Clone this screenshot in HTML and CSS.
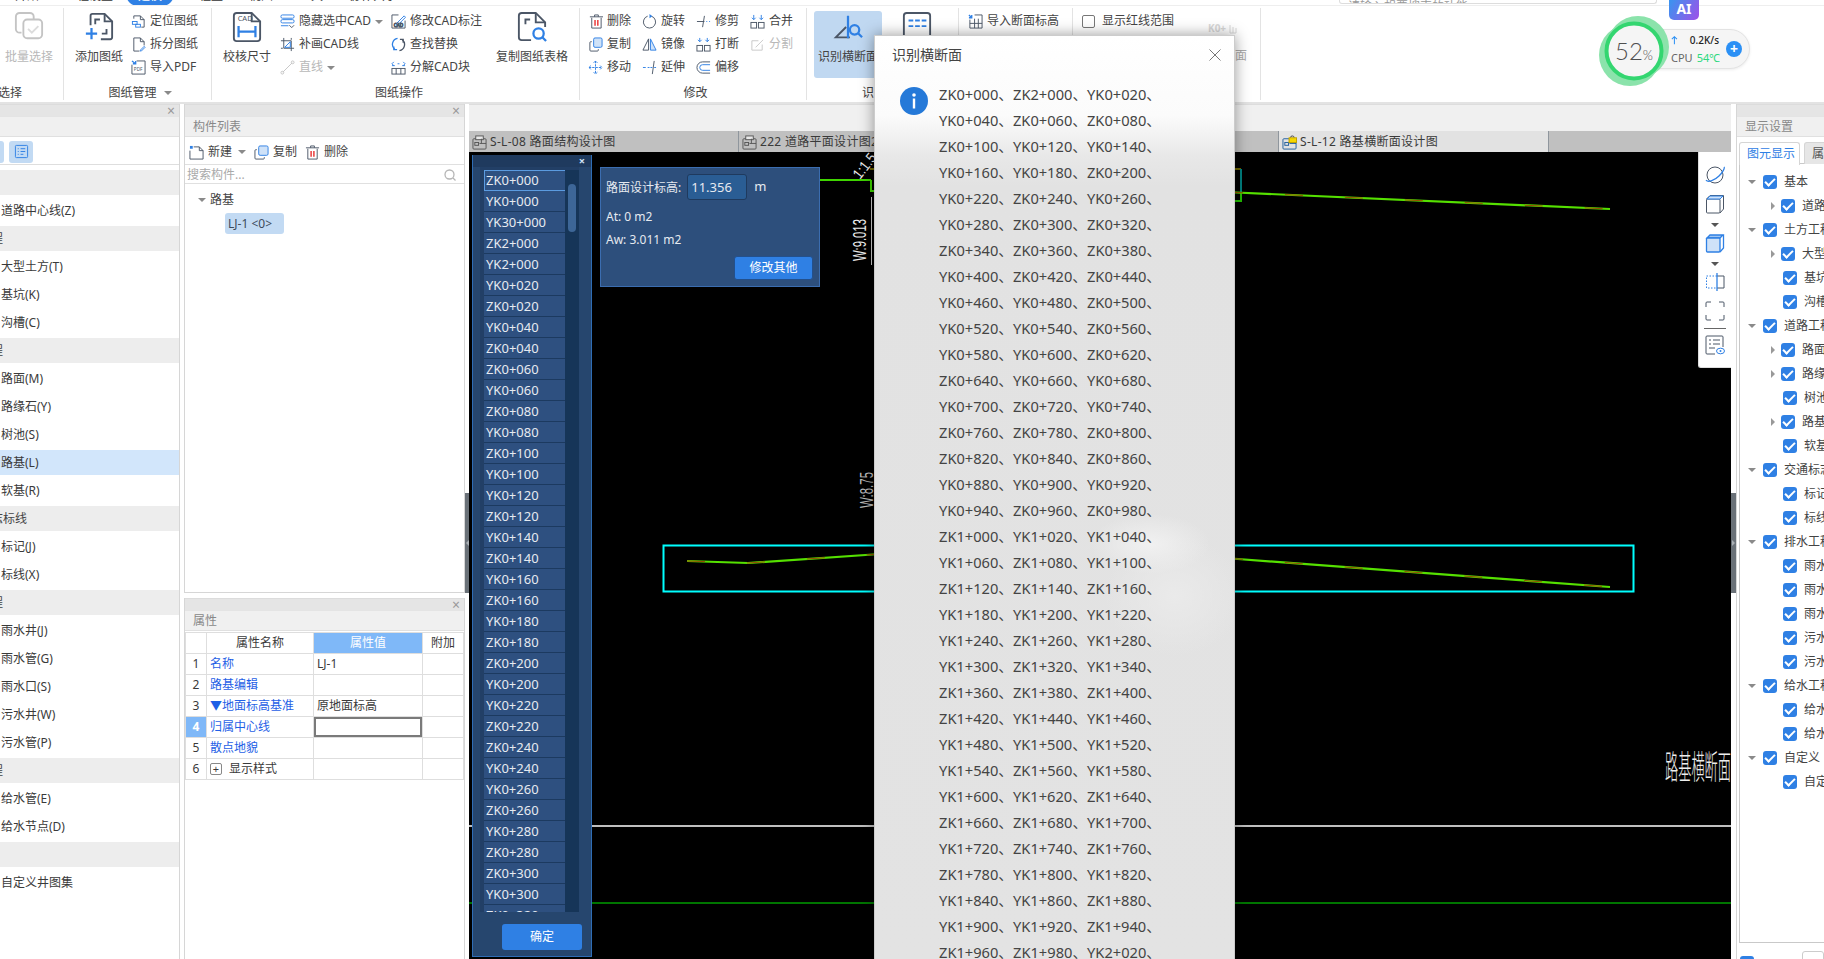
FILE: index.html
```html
<!DOCTYPE html>
<html lang="zh-CN">
<head>
<meta charset="utf-8">
<title>识别横断面</title>
<link rel="stylesheet" href="styles.css">
</head>
<body>
<div class="app">
  <header class="menubar">
    <nav class="menu">
      <span>开始</span><span>工程设置</span><span class="menu-on">建模</span><span>工程量</span><span>视图</span><span>工具</span><span>协作共享</span>
    </nav>
    <div class="topsearch">请输入想要搜索的功能</div>
    <span class="topright">工程协同</span>
  </header>

  <section class="ribbon">
    <div class="group g-select">
      <div class="group-body">
        <div class="big big-disabled">
          <svg class="ic30" viewBox="0 0 30 32" fill="none" stroke="#c4c4c4" stroke-width="2"><path d="M7 22H5a4 4 0 0 1-4-4V5a4 4 0 0 1 4-4h11a4 4 0 0 1 4 4v3"/><rect x="9" y="8" width="20" height="20" rx="4"/><path d="M14 18l4 4 7-7" stroke="#dcdcdc"/></svg>
          <span>批量选择</span>
        </div>
      </div>
      <div class="group-label">选择</div>
    </div>

    <div class="group g-sheet">
      <div class="group-body">
        <div class="big">
          <svg class="ic30" viewBox="0 0 30 32" fill="none" stroke="#4b5666" stroke-width="2"><path d="M6 14V4a2 2 0 0 1 2-2h13l8 8v17a2 2 0 0 1-2 2H17"/><path d="M21 2v8h8"/><path d="M11 13V8h5M23 18v5h-5"/><path d="M7 17v12M1 23h12" stroke="#2f80e4" stroke-width="2.4"/></svg>
          <span>添加图纸</span>
        </div>
        <div class="col col-a">
          <div class="rb"><svg class="ic15" viewBox="0 0 16 16" fill="none" stroke="#4b5666"><path d="M3 5V2h7l4 4v8h-3"/><path d="M10 2v4h4"/><rect x="1.5" y="8" width="5" height="3" stroke="#2f80e4"/><rect x="5" y="11" width="5" height="3" stroke="#2f80e4"/></svg><span>定位图纸</span></div>
          <div class="rb"><svg class="ic15" viewBox="0 0 16 16" fill="none" stroke="#4b5666"><path d="M9 15H3V1h7l4 4v4"/><path d="M10 1v4h4"/><path d="M10 14l4-4 1 1-4 4h-1z" stroke="#2f80e4"/></svg><span>拆分图纸</span></div>
          <div class="rb"><svg class="ic15" viewBox="0 0 16 16" fill="none"><path d="M1 5v10h14V1H6" stroke="#4b5666"/><path d="M1 1l4 3M5 1v3H2" stroke="#2f80e4" stroke-width="1.4"/><text x="3" y="12" class="tiny">PDF</text></svg><span>导入PDF</span></div>
        </div>
      </div>
      <div class="group-label">图纸管理 <i class="tri-down tri-gap"></i></div>
    </div>

    <div class="group g-cad">
      <div class="group-body">
        <div class="big">
          <svg class="ic30" viewBox="0 0 30 32" fill="none" stroke="#4b5666" stroke-width="2"><path d="M20 1H4a3 3 0 0 0-3 3v24a3 3 0 0 0 3 3h22a3 3 0 0 0 3-3V10z"/><path d="M20 1v9h9"/><text x="5" y="10" class="cadmark">CAD</text><path d="M6 21h18M6 15v12M24 15v12" stroke="#2f80e4" stroke-width="2.4"/></svg>
          <span>校核尺寸</span>
        </div>
        <div class="col col-b">
          <div class="rb"><svg class="ic15" viewBox="0 0 16 16" fill="none" stroke="#2f80e4"><rect x="1" y="1" width="14" height="3.5" rx="1.5"/><rect x="1" y="6" width="14" height="3.5" rx="1.5"/><path d="M1 12.5h8" /><path d="M10 12l2.500 2.500L15 12" stroke="#4b5666"/></svg><span>隐藏选中CAD</span><i class="tri-down"></i></div>
          <div class="rb"><svg class="ic15" viewBox="0 0 16 16" fill="none" stroke="#4b5666"><path d="M4 1v11M1 4h11M12 4v11M4 12h11M1 12h2M12 1v2"/><path d="M5 11l6-6v6z" stroke="#2f80e4"/></svg><span>补画CAD线</span></div>
          <div class="rb rb-off"><svg class="ic15" viewBox="0 0 16 16" fill="none" stroke="#c4c4c4"><path d="M3 13L13 3"/><circle cx="2.500" cy="13.500" r="1.500"/><circle cx="13.500" cy="2.500" r="1.500"/></svg><span>直线</span><i class="tri-down"></i></div>
        </div>
        <div class="col col-c">
          <div class="rb"><svg class="ic15" viewBox="0 0 16 16" fill="none" stroke="#4b5666"><path d="M8 1H1v14h14V7"/><path d="M6 10l8-8 1.500 1.500-8 8-2 .5z" stroke="#2f80e4"/><text x="3" y="14" class="tiny tiny-blue">CAD</text></svg><span>修改CAD标注</span></div>
          <div class="rb"><svg class="ic15" viewBox="0 0 16 16" fill="none" stroke-width="1.4"><path d="M7 1.500A6.500 6.500 0 0 0 4 13" stroke="#2f80e4"/><path d="M9 14.500A6.500 6.500 0 0 0 12 3" stroke="#4b5666"/><path d="M3 10v3.500h3.500" stroke="#2f80e4"/><path d="M13 6V2.500H9.500" stroke="#4b5666"/></svg><span>查找替换</span></div>
          <div class="rb"><svg class="ic15" viewBox="0 0 16 16" fill="none" stroke="#4b5666"><rect x="1" y="9" width="14" height="6"/><path d="M5.500 9v6M10.500 9v6"/><path d="M1 6h3M12 6h3M3 2L1 4l2 2M13 2l2 2-2 2M7 4h2" stroke="#2f80e4"/></svg><span>分解CAD块</span></div>
        </div>
        <div class="big big-wide">
          <svg class="ic30" viewBox="0 0 30 32" fill="none" stroke="#4b5666" stroke-width="2"><path d="M14 30H4a3 3 0 0 1-3-3V4a3 3 0 0 1 3-3h15l10 10v5"/><path d="M19 1v10h10"/><path d="M8 13V8h5"/><circle cx="22" cy="23" r="5.500" stroke="#2f80e4" stroke-width="2.400"/><path d="M26 27l4 4" stroke="#2f80e4" stroke-width="2.400"/></svg>
          <span>复制图纸表格</span>
        </div>
      </div>
      <div class="group-label">图纸操作</div>
    </div>

    <div class="group g-edit">
      <div class="group-body">
        <div class="col col-d">
          <div class="rb"><svg class="ic15" viewBox="0 0 16 16" fill="none" stroke="#4b5666"><path d="M4 4v11h10V4M2 3h14M7 3V1h4v2"/><path d="M7.500 6.500v6M10.500 6.500v6" stroke="#e62020" stroke-width="1.400"/></svg><span>删除</span></div>
          <div class="rb"><svg class="ic15" viewBox="0 0 16 16" fill="none"><rect x="6" y="1" width="9" height="10" rx="1.500" fill="#cfe2f8" stroke="#2f80e4"/><path d="M4 5H3a1 1 0 0 0-1 1v8a1 1 0 0 0 1 1h7a1 1 0 0 0 1-1v-1" stroke="#4b5666"/></svg><span>复制</span></div>
          <div class="rb"><svg class="ic15" viewBox="0 0 16 16" fill="none" stroke="#2f80e4"><path d="M8 1v14M1 8h14M6 3l2-2 2 2M6 13l2 2 2-2M3 6L1 8l2 2M13 6l2 2-2 2" stroke-dasharray="2.500 1"/></svg><span>移动</span></div>
        </div>
        <div class="col col-d">
          <div class="rb"><svg class="ic15" viewBox="0 0 16 16" fill="none"><path d="M10 2.300A6.500 6.500 0 1 1 6 2.300" stroke="#4b5666"/><path d="M8 0l3 2.300L8 4.600" fill="#2f80e4"/></svg><span>旋转</span></div>
          <div class="rb"><svg class="ic15" viewBox="0 0 16 16" fill="none" stroke="#4b5666"><path d="M7 2L1 14h6z"/><path d="M9 2l6 12H9z" fill="#cfe2f8" stroke="#2f80e4"/></svg><span>镜像</span></div>
          <div class="rb"><svg class="ic15" viewBox="0 0 16 16" fill="none" stroke="#4b5666"><path d="M1 8h3M6 8h2" stroke="#2f80e4"/><path d="M9 8h2M13 8h2" stroke="#2f80e4"/><path d="M13 1L11 15"/></svg><span>延伸</span></div>
        </div>
        <div class="col col-d">
          <div class="rb"><svg class="ic15" viewBox="0 0 16 16" fill="none" stroke="#4b5666"><path d="M1 8h8M9 2L7 14"/><path d="M11 8h1M14 8h1" stroke="#2f80e4"/></svg><span>修剪</span></div>
          <div class="rb"><svg class="ic15" viewBox="0 0 16 16" fill="none" stroke="#4b5666"><rect x="1" y="9" width="6" height="6"/><rect x="9" y="9" width="6" height="6"/><path d="M4 1v4M2 3l2 2 2-2M12 1v4M10 3l2 2 2-2" stroke="#2f80e4"/></svg><span>打断</span></div>
          <div class="rb"><svg class="ic15" viewBox="0 0 16 16" fill="none"><path d="M15 2H7a6 6 0 0 0 0 12h8" stroke="#4b5666"/><path d="M15 5H7a3 3 0 0 0 0 6h8" stroke="#2f80e4"/></svg><span>偏移</span></div>
        </div>
        <div class="col col-d">
          <div class="rb"><svg class="ic15" viewBox="0 0 16 16" fill="none" stroke="#4b5666"><rect x="1" y="9" width="6" height="6"/><rect x="9" y="9" width="6" height="6"/><path d="M4 1v5M2 4l2 2 2-2M12 1v5M10 4l2 2 2-2" stroke="#2f80e4"/></svg><span>合并</span></div>
          <div class="rb rb-off"><svg class="ic15" viewBox="0 0 16 16" fill="none" stroke="#c8c8c8"><path d="M9 4H2v10h11V8"/><path d="M6 11l8-8"/></svg><span>分割</span></div>
        </div>
      </div>
      <div class="group-label label-edit">修改</div>
    </div>

    <div class="group g-recog">
      <div class="group-body">
        <div class="big big-active">
          <svg class="ic30" viewBox="0 0 32 26" fill="none" stroke="#4b5666" stroke-width="2"><path d="M14 13L3 24h15"/><path d="M16 1v24" stroke="#2f80e4" stroke-width="2.400"/><circle cx="23" cy="16" r="5" stroke="#2f80e4" stroke-width="2.400"/><path d="M27 20l4 4" stroke="#2f80e4" stroke-width="2.400"/></svg>
          <span>识别横断面</span>
        </div>
        <div class="big big-next">
          <svg class="ic30" viewBox="0 0 30 32" fill="none" stroke="#4b5666" stroke-width="2"><rect x="1" y="1" width="28" height="29" rx="3"/><path d="M6 9h5M13 9h5M20 9h5M6 15h5M13 15h5M20 15h5" stroke="#2f80e4"/></svg>
        </div>
      </div>
      <div class="group-label label-recog">识别断面</div>
    </div>

    <div class="group g-import">
      <div class="group-body">
        <div class="col">
          <div class="rb"><svg class="ic15" viewBox="0 0 16 16" fill="none" stroke="#4b5666"><path d="M2 6v9h13V1H7M2 10h13M7 5v10M11 5v10"/><path d="M1 1l3 3M4 1v3H1" stroke="#2f80e4" stroke-width="1.400"/></svg><span>导入断面标高</span></div>
        </div>
      </div>
    </div>

    <div class="group g-show">
      <div class="group-body">
        <div class="col col-show">
          <label class="rb rb-check"><i class="box"></i><span>显示红线范围</span></label>
        </div>
        <div class="big big-faded">
          <svg class="ic-k0" viewBox="0 0 30 13"><text x="0" y="11" class="k0">K0+</text><path d="M22 12V4M25 12V6M28 12V7M22 12h6" fill="none" stroke="#d8d8d8"/></svg>
          <span>选择断面</span>
        </div>
      </div>
    </div>
  </section>

  <main class="main">
    <aside class="panel-left">
      <div class="bar"><span class="x">×</span></div>
      <div class="heading"></div>
      <div class="left-tools">
        <span class="tool-btn tool-cut"></span>
        <span class="tool-btn"><svg class="ic15" viewBox="0 0 16 16" fill="none" stroke="#2f80e4"><rect x="1.500" y="1.500" width="13" height="13" rx="1"/><path d="M4 5h1M7 5h5M4 8h1M7 8h5M4 11h1M7 11h3"/></svg></span>
      </div>
      <div class="cat"><b>基本</b></div>
      <div class="cat-group"><div class="cat-item">道路中心线(Z)</div></div>
      <div class="cat"><b>土方工程</b></div>
      <div class="cat-group"><div class="cat-item">大型土方(T)</div><div class="cat-item">基坑(K)</div><div class="cat-item">沟槽(C)</div></div>
      <div class="cat"><b>道路工程</b></div>
      <div class="cat-group"><div class="cat-item">路面(M)</div><div class="cat-item">路缘石(Y)</div><div class="cat-item">树池(S)</div><div class="cat-item cat-on">路基(L)</div><div class="cat-item">软基(R)</div></div>
      <div class="cat"><b>交通标志标线</b></div>
      <div class="cat-group"><div class="cat-item">标记(J)</div><div class="cat-item">标线(X)</div></div>
      <div class="cat"><b>排水工程</b></div>
      <div class="cat-group"><div class="cat-item">雨水井(J)</div><div class="cat-item">雨水管(G)</div><div class="cat-item">雨水口(S)</div><div class="cat-item">污水井(W)</div><div class="cat-item">污水管(P)</div></div>
      <div class="cat"><b>给水工程</b></div>
      <div class="cat-group"><div class="cat-item">给水管(E)</div><div class="cat-item">给水节点(D)</div></div>
      <div class="cat"><b>自定义</b></div>
      <div class="cat-group"><div class="cat-item">自定义井图集</div></div>
    </aside>

    <div class="mid-col">
      <section class="panel panel-list">
        <div class="bar"><span class="x">×</span></div>
        <div class="heading">构件列表</div>
        <div class="list-tools">
          <span class="lt lt-new"><svg class="ic15" viewBox="0 0 16 16" fill="none" stroke="#4b5666"><path d="M5 2h6l4 4v9H1V6"/><path d="M11 2v4h4"/><path d="M1 1h3v3H1z" fill="#2f80e4" stroke="none"/></svg>新建<i class="tri-down"></i></span>
          <span class="lt"><svg class="ic15" viewBox="0 0 16 16" fill="none"><rect x="5" y="1" width="10" height="10" rx="1.500" fill="#cfe2f8" stroke="#2f80e4"/><path d="M3 5H2a1 1 0 0 0-1 1v8a1 1 0 0 0 1 1h8a1 1 0 0 0 1-1v-1" stroke="#4b5666"/></svg>复制</span>
          <span class="lt"><svg class="ic15" viewBox="0 0 16 16" fill="none" stroke="#4b5666"><path d="M3 4v11h10V4M1 3h14M6 3V1h4v2"/><path d="M6.500 6.500v6M9.500 6.500v6" stroke="#e62020" stroke-width="1.400"/></svg>删除</span>
        </div>
        <div class="list-search"><span>搜索构件...</span><svg class="ic-search" viewBox="0 0 12 12" fill="none" stroke="#b5b5b5" stroke-width="1.300"><circle cx="5.500" cy="5.500" r="4.500"/><path d="M9 9l2.500 2.500"/></svg></div>
        <div class="tree">
          <div class="tree-root"><i class="tri-down"></i>路基</div>
          <div class="chip">LJ-1 &lt;0&gt;</div>
        </div>
      </section>
      <section class="panel panel-props">
        <div class="bar"><span class="x">×</span></div>
        <div class="heading">属性</div>
        <table class="props">
          <colgroup><col class="c-n"><col class="c-name"><col class="c-val"><col class="c-add"></colgroup>
          <tr><th></th><th>属性名称</th><th class="th-on">属性值</th><th>附加</th></tr>
          <tr><td class="num">1</td><td class="link">名称</td><td>LJ-1</td><td></td></tr>
          <tr><td class="num">2</td><td class="link">路基编辑</td><td></td><td></td></tr>
          <tr><td class="num">3</td><td class="link">▼地面标高基准</td><td>原地面标高</td><td></td></tr>
          <tr><td class="num num-on">4</td><td class="link">归属中心线</td><td class="cell-edit"></td><td></td></tr>
          <tr><td class="num">5</td><td class="link">散点地貌</td><td></td><td></td></tr>
          <tr><td class="num">6</td><td><i class="plus">+</i>显示样式</td><td></td><td></td></tr>
        </table>
      </section>
    </div>

    <div class="splitter"><span class="handle handle-l"></span></div>

    <section class="center">
      <div class="center-top"></div>
      <div class="tabs">
        <div class="tab"><svg class="ic15" viewBox="0 0 16 16" fill="none" stroke="#555"><rect x="1" y="4" width="14" height="11" rx="1"/><rect x="4" y="1" width="8" height="4" fill="#e8e8e8"/><rect x="3" y="8" width="4" height="3"/><path d="M8 9h7M10 4v5"/></svg><span>S-L-08 路面结构设计图</span></div>
        <div class="tab"><svg class="ic15" viewBox="0 0 16 16" fill="none" stroke="#555"><rect x="1" y="4" width="14" height="11" rx="1"/><rect x="4" y="1" width="8" height="4" fill="#e8e8e8"/><rect x="3" y="8" width="4" height="3"/><path d="M8 9h7M10 4v5"/></svg><span>222 道路平面设计图2018</span></div>
        <div class="tab"></div>
        <div class="tab tab-on"><svg class="ic15" viewBox="0 0 16 16" fill="none" stroke="#1f5f9e"><rect x="1" y="4" width="14" height="11" rx="1"/><rect x="3" y="8" width="4" height="3"/><path d="M8 9h7"/><path d="M9 3a2 2 0 0 1 4 0" stroke="#444"/><rect x="7.500" y="3" width="8" height="5" fill="#f5d800" stroke="#c0a000"/></svg><span>S-L-12 路基横断面设计图</span></div>
      </div>
      <div class="canvas">
        <svg class="drawing" viewBox="469 152 1262 807" fill="none">
          <path d="M469 826H1731" stroke="#fff" stroke-width="1.300"/>
          <path d="M469 903H1731" stroke="#009c00" stroke-width="1.500"/>
          <rect x="663.500" y="545.500" width="970" height="46" stroke="#00ffff" stroke-width="2"/>
          <path d="M820 180H871M871 180V191H880" stroke="#3fd400" stroke-width="2"/>
          <path d="M870 169H1241" stroke="#d8c800" stroke-width="1"/>
          <path d="M1241 169V193" stroke="#008080" stroke-width="2"/>
          <path d="M1241 193V201H1230" stroke="#22c000" stroke-width="2"/>
          <path d="M1225 192L1610 209" stroke="#55e000" stroke-width="2.200"/>
          <path d="M1225 192L1610 209" stroke="#9a4d00" stroke-width="1" stroke-dasharray="18 42"/>
          <path d="M687 561L748 563L880 554" stroke="#55e000" stroke-width="2.200"/>
          <path d="M687 561L748 563L880 554" stroke="#9a4d00" stroke-width="1" stroke-dasharray="18 42"/>
          <path d="M1225 558L1610 587" stroke="#55e000" stroke-width="2.200"/>
          <path d="M1225 558L1610 587" stroke="#9a4d00" stroke-width="1" stroke-dasharray="18 42"/>
          <path d="M871.500 197V265" stroke="#ccc" stroke-width="1"/>
          <text class="cad-t" transform="translate(866 261) rotate(-90)" textLength="42" lengthAdjust="spacingAndGlyphs">W:9.013</text>
          <text class="cad-t cad-dim" transform="translate(873 508) rotate(-90)" textLength="36" lengthAdjust="spacingAndGlyphs">W:8.75</text>
          <text class="cad-t cad-slope" transform="translate(860 180) rotate(-52)" textLength="28" lengthAdjust="spacingAndGlyphs">1:1.5</text>
          <text class="cad-title" transform="translate(1665 779) scale(.4 1)">路基横断面设计图</text>
        </svg>

        <div class="stations">
          <div class="stations-head"><span>×</span></div>
          <div class="stations-body">
            <ul class="st-list">
              <li class="st-on">ZK0+000</li><li>YK0+000</li><li>YK30+000</li><li>ZK2+000</li><li>YK2+000</li><li>YK0+020</li><li>ZK0+020</li><li>YK0+040</li><li>ZK0+040</li><li>ZK0+060</li><li>YK0+060</li><li>ZK0+080</li><li>YK0+080</li><li>ZK0+100</li><li>YK0+100</li><li>YK0+120</li><li>ZK0+120</li><li>YK0+140</li><li>ZK0+140</li><li>YK0+160</li><li>ZK0+160</li><li>YK0+180</li><li>ZK0+180</li><li>ZK0+200</li><li>YK0+200</li><li>YK0+220</li><li>ZK0+220</li><li>ZK0+240</li><li>YK0+240</li><li>YK0+260</li><li>ZK0+260</li><li>YK0+280</li><li>ZK0+280</li><li>ZK0+300</li><li>YK0+300</li><li>ZK0+320</li>
            </ul>
            <div class="st-scroll"><span></span></div>
          </div>
          <div class="st-foot"><span class="btn-blue btn-ok">确定</span></div>
        </div>

        <div class="elev">
          <div class="elev-row"><span>路面设计标高:</span><span class="elev-input">11.356</span><span class="elev-unit">m</span></div>
          <div class="elev-line elev-first">At: 0 m2</div>
          <div class="elev-line elev-second">Aw: 3.011 m2</div>
          <div class="elev-foot"><span class="btn-blue btn-other">修改其他</span></div>
        </div>

        <div class="strip">
          <svg class="ic20" viewBox="0 0 20 20" fill="none" stroke="#4b5666"><circle cx="10" cy="10" r="8"/><path d="M1 15c2 3 9 0 13-4s6-8 5-9" stroke="#2f80e4" stroke-width="1.300"/></svg>
          <svg class="ic20" viewBox="0 0 20 20" fill="none" stroke="#4b5666"><rect x="1.500" y="5" width="13.500" height="14" rx="1"/><path d="M1.500 5L5 1.500h13.500V15L15 19" /><path d="M2 5l3-3h13l-3 3z" fill="#cfe2f8" stroke="#2f80e4"/></svg>
          <i class="tri-down tri-strip"></i>
          <svg class="ic20" viewBox="0 0 20 20" fill="none" stroke="#2f80e4" stroke-width="1.300"><path d="M2 5l3-3h13l-3 3z" fill="#9fc5f2"/><rect x="1.500" y="5" width="13.500" height="14" rx="1" fill="#cfe2f8"/><path d="M15 19l3.500-4V2"/></svg>
          <i class="tri-down tri-strip"></i>
          <svg class="ic20" viewBox="0 0 20 20" fill="none" stroke="#4b5666"><path d="M12 4H1.500v12H12" stroke="#2f80e4" stroke-dasharray="1.500 1.500"/><path d="M12 4h7v12h-7"/><path d="M12 1v18" stroke="#2f80e4" stroke-width="1.300"/></svg>
          <svg class="ic20" viewBox="0 0 20 20" fill="none" stroke="#4b5666"><path d="M1 6V2a1 1 0 0 1 1-1h4M14 1h4a1 1 0 0 1 1 1v4M19 14v4a1 1 0 0 1-1 1h-4M6 19H2a1 1 0 0 1-1-1v-4"/></svg>
          <span class="strip-sep"></span>
          <svg class="ic20" viewBox="0 0 20 20" fill="none" stroke="#4b5666"><path d="M10 19H2a1 1 0 0 1-1-1V2a1 1 0 0 1 1-1h15a1 1 0 0 1 1 1v10"/><path d="M4 5h2M8 5h7M4 9h2M8 9h7M4 13h6"/><ellipse cx="15.500" cy="16" rx="4" ry="2.800" stroke="#2f80e4"/><circle cx="15.500" cy="16" r="1" fill="#2f80e4" stroke="none"/></svg>
        </div>
      </div>
    </section>

    <div class="splitter splitter-r"><span class="handle handle-r"></span></div>

    <aside class="panel-right">
      <div class="bar"></div>
      <div class="heading heading-r">显示设置</div>
      <div class="r-tabs"><span class="r-tab r-tab-on">图元显示</span><span class="r-tab">属性设置</span></div>
      <div class="r-tree">
        <div class="r-row"><i class="tri-down"></i><i class="check"></i>基本</div>
        <div class="r-row r-child"><i class="tri-right"></i><i class="check"></i>道路中心线</div>
        <div class="r-row"><i class="tri-down"></i><i class="check"></i>土方工程</div>
        <div class="r-row r-child"><i class="tri-right"></i><i class="check"></i>大型土方</div>
        <div class="r-row r-child r-leaf"><i class="check"></i>基坑</div>
        <div class="r-row r-child r-leaf"><i class="check"></i>沟槽</div>
        <div class="r-row"><i class="tri-down"></i><i class="check"></i>道路工程</div>
        <div class="r-row r-child"><i class="tri-right"></i><i class="check"></i>路面</div>
        <div class="r-row r-child"><i class="tri-right"></i><i class="check"></i>路缘石</div>
        <div class="r-row r-child r-leaf"><i class="check"></i>树池</div>
        <div class="r-row r-child"><i class="tri-right"></i><i class="check"></i>路基</div>
        <div class="r-row r-child r-leaf"><i class="check"></i>软基</div>
        <div class="r-row"><i class="tri-down"></i><i class="check"></i>交通标志标线</div>
        <div class="r-row r-child r-leaf"><i class="check"></i>标记</div>
        <div class="r-row r-child r-leaf"><i class="check"></i>标线</div>
        <div class="r-row"><i class="tri-down"></i><i class="check"></i>排水工程</div>
        <div class="r-row r-child r-leaf"><i class="check"></i>雨水井</div>
        <div class="r-row r-child r-leaf"><i class="check"></i>雨水管</div>
        <div class="r-row r-child r-leaf"><i class="check"></i>雨水口</div>
        <div class="r-row r-child r-leaf"><i class="check"></i>污水井</div>
        <div class="r-row r-child r-leaf"><i class="check"></i>污水管</div>
        <div class="r-row"><i class="tri-down"></i><i class="check"></i>给水工程</div>
        <div class="r-row r-child r-leaf"><i class="check"></i>给水管</div>
        <div class="r-row r-child r-leaf"><i class="check"></i>给水节点</div>
        <div class="r-row"><i class="tri-down"></i><i class="check"></i>自定义</div>
        <div class="r-row r-child r-leaf"><i class="check"></i>自定义井</div>
      </div>
      <div class="r-foot"><i class="check"></i><span class="r-foot-btn"></span></div>
    </aside>
  </main>

  <div class="ai-badge">AI</div>

  <div class="gauge">
    <div class="ring">
      <svg class="ring-art" viewBox="0 0 68 70"><circle cx="30" cy="40" r="31" fill="#8be3ab"/><circle cx="38" cy="32" r="31" fill="#8be3ab"/><circle cx="34" cy="36" r="27.500" fill="#f5f5f5" stroke="#33d670" stroke-width="4"/></svg>
      <span class="ring-text">52<small>%</small></span>
    </div>
    <div class="gauge-pill">
      <div class="gauge-stats">
        <div class="gauge-line"><svg class="ic-up" viewBox="0 0 8 10" fill="none" stroke="#2b90f5" stroke-width="1.200"><path d="M4 10V1M1 4l3-3 3 3"/></svg><b>0.2K/s</b></div>
        <div class="gauge-line gauge-cpu">CPU <em>54℃</em></div>
      </div>
      <span class="gauge-plus">+</span>
    </div>
  </div>

  <section class="dialog">
    <div class="dialog-head"><span>识别横断面</span><svg class="dialog-x" viewBox="0 0 12 12" fill="none" stroke="#777"><path d="M.5.5l11 11M11.500.5l-11 11"/></svg></div>
    <div class="dialog-body">
      <svg class="info" viewBox="0 0 28 28"><circle cx="14" cy="14" r="14" fill="#2579d8"/><circle cx="14" cy="8" r="1.800" fill="#fff"/><rect x="12.800" y="11.500" width="2.400" height="10" fill="#fff"/></svg>
      <div class="dialog-lines">
        <p>ZK0+000、ZK2+000、YK0+020、</p>
        <p>YK0+040、ZK0+060、ZK0+080、</p>
        <p>ZK0+100、YK0+120、YK0+140、</p>
        <p>YK0+160、YK0+180、ZK0+200、</p>
        <p>YK0+220、ZK0+240、YK0+260、</p>
        <p>YK0+280、ZK0+300、ZK0+320、</p>
        <p>ZK0+340、ZK0+360、ZK0+380、</p>
        <p>YK0+400、ZK0+420、ZK0+440、</p>
        <p>YK0+460、YK0+480、ZK0+500、</p>
        <p>YK0+520、YK0+540、ZK0+560、</p>
        <p>YK0+580、YK0+600、ZK0+620、</p>
        <p>ZK0+640、YK0+660、YK0+680、</p>
        <p>YK0+700、ZK0+720、YK0+740、</p>
        <p>ZK0+760、ZK0+780、ZK0+800、</p>
        <p>ZK0+820、YK0+840、ZK0+860、</p>
        <p>YK0+880、YK0+900、YK0+920、</p>
        <p>YK0+940、ZK0+960、ZK0+980、</p>
        <p>ZK1+000、YK1+020、YK1+040、</p>
        <p>YK1+060、ZK1+080、YK1+100、</p>
        <p>ZK1+120、ZK1+140、ZK1+160、</p>
        <p>YK1+180、YK1+200、YK1+220、</p>
        <p>YK1+240、ZK1+260、YK1+280、</p>
        <p>YK1+300、ZK1+320、YK1+340、</p>
        <p>ZK1+360、ZK1+380、ZK1+400、</p>
        <p>ZK1+420、YK1+440、YK1+460、</p>
        <p>YK1+480、YK1+500、YK1+520、</p>
        <p>YK1+540、ZK1+560、YK1+580、</p>
        <p>YK1+600、YK1+620、ZK1+640、</p>
        <p>ZK1+660、ZK1+680、YK1+700、</p>
        <p>YK1+720、ZK1+740、ZK1+760、</p>
        <p>ZK1+780、YK1+800、YK1+820、</p>
        <p>YK1+840、YK1+860、ZK1+880、</p>
        <p>YK1+900、YK1+920、ZK1+940、</p>
        <p>ZK1+960、ZK1+980、YK2+020、</p>
      </div>
    </div>
  </section>
</div>
</body>
</html>
```

FILE: styles.css
```css
* { box-sizing: border-box; }
html, body { margin: 0; height: 100%; background: #fff; }
body { font: 12px/1.2 "Noto Sans", "Noto Sans CJK SC", sans-serif; color: #3a3a3a; overflow: hidden; }
i, em { font-style: normal; }

.app { position: relative; width: 1824px; height: 959px; overflow: hidden; display: flex; flex-direction: column; }

.menubar { height: 6px; flex: none; display: flex; border-bottom: 1px solid #eee; overflow: hidden; position: relative; }
.menu { display: flex; gap: 26px; padding-left: 15px; margin-top: -12px; line-height: 16px; height: 18px; color: #333; }
.menu-on { background: #2f80e4; color: #fff; padding: 0 12px; margin: 0 -13px; border-radius: 0 0 12px 12px; }
.topsearch { margin-left: 942px; width: 318px; height: 4px; border: 1px solid #ddd; border-top: 0; border-radius: 0 0 3px 3px; color: #999; line-height: 14px; padding-left: 8px; overflow: hidden; }
.topright { margin-left: 45px; margin-top: -13px; color: #333; line-height: 14px; }

/* ribbon */
.ribbon { height: 98px; flex: none; display: flex; align-items: flex-start; border-bottom: 2px solid #e3e3e3; }
.group { height: 92px; margin-top: 2px; flex: none; display: flex; flex-direction: column; border-right: 1px solid #e3e3e3; }
.group-body { height: 77px; display: flex; flex: none; }
.group-label { height: 15px; line-height: 14px; text-align: center; color: #444; display: flex; align-items: center; justify-content: center; }
.g-select { width: 64px; padding-left: 5px; }
.g-select .group-label { justify-content: flex-start; margin-left: -7px; }
.g-sheet { width: 148px; padding-left: 11px; }
.g-sheet .group-label { margin-left: -6px; }
.g-cad { width: 368px; padding-left: 11px; }
.g-cad .group-label { margin-left: -4px; }
.g-edit { width: 227px; padding-left: 8px; }
.label-edit { margin-right: 3px; }
.g-recog { width: 152px; padding-left: 7px; }
.g-import { width: 114px; padding-left: 9px; }
.g-show { width: 188px; padding-left: 9px; }

.big { width: 48px; flex: none; display: flex; flex-direction: column; align-items: center; padding-top: 4px; white-space: nowrap; color: #444; }
.big span { margin-top: 7px; line-height: 15px; }
.big-disabled { color: #b8b8b8; }
.big-wide { width: 72px; }
.big-active { width: 68px; height: 67px; margin-top: 3px; padding-top: 1px; background: #c0d8f1; border-radius: 3px; }
.big-next { margin-left: 20px; width: 30px; }
.big-faded { width: 48px; margin-left: 7px; color: #aaa; padding-top: 13px; }
.big-faded span { margin-top: 14px; }
.ic30 { width: 30px; height: 30px; flex: none; }
.ic15 { width: 15px; height: 15px; flex: none; }
.ic20 { width: 20px; height: 20px; flex: none; }
.ic-k0 { width: 30px; height: 13px; flex: none; }
.tiny { font: 5px "Noto Sans", sans-serif; fill: #4b5666; }
.tiny-blue { fill: #2f80e4; }
.cadmark { font: 8px "Noto Sans", sans-serif; fill: #4b5666; stroke: none; }
.k0 { font: bold 10px "Noto Sans", sans-serif; fill: #d8d8d8; }

.col { display: flex; flex-direction: column; padding-top: 2px; flex: none; }
.col-a { margin-left: 8px; }
.col-b { margin-left: 9px; width: 111px; }
.col-c { width: 105px; }
.col-d { width: 54px; }
.col-show { width: 110px; }
.rb { height: 23px; display: flex; align-items: center; gap: 4px; white-space: nowrap; color: #444; }
.rb-off { color: #b8b8b8; }
.rb-check { gap: 7px; }
.box { width: 13px; height: 13px; border: 1px solid #777; border-radius: 2px; flex: none; background: #fff; }

.tri-down { display: inline-block; width: 0; height: 0; border: 4px solid transparent; border-top: 4px solid #8a8a8a; border-bottom: 0; flex: none; }
.tri-right { display: inline-block; width: 0; height: 0; border: 4px solid transparent; border-left: 4px solid #999; border-right: 0; flex: none; }
.tri-gap { margin-left: 7px; }
.rb .tri-down { margin-left: 0; }

/* main row */
.main { flex: 1; min-height: 0; display: flex; }
.bar { height: 12px; background: #e5e5e5; border-top: 1px solid #dcdcdc; display: flex; justify-content: flex-end; flex: none; }
.x { width: 16px; color: #999; font-size: 14px; line-height: 11px; text-align: center; }
.heading { height: 21px; background: #f0f0f0; color: #888; padding-left: 8px; line-height: 20px; border-bottom: 1px solid #e0e0e0; border-top: 1px solid #e4e4e4; flex: none; }

.panel-left { width: 180px; flex: none; border-right: 1px solid #d6d6d6; margin-right: 4px; overflow: hidden; }
.left-tools { height: 28px; display: flex; align-items: center; gap: 5px; border-bottom: 1px solid #dedede; margin-bottom: 5px; padding-top: 2px; }
.tool-btn { width: 24px; height: 22px; background: #c2daf3; border-radius: 3px; display: flex; align-items: center; justify-content: center; }
.tool-cut { margin-left: -20px; }
.cat { height: 25px; background: #ededed; line-height: 25px; color: #444; white-space: nowrap; }
.cat b { font-weight: 400; margin-left: -45px; display: inline-block; }
.cat-group { padding: 3px 0; display: flex; flex-direction: column; gap: 3px; }
.cat-item { height: 25px; line-height: 25px; padding-left: 1px; color: #3a3a3a; white-space: nowrap; }
.cat-on { background: #d2e6fb; }

.mid-col { width: 281px; flex: none; display: flex; flex-direction: column; gap: 5px; }
.panel { border-left: 1px solid #d6d6d6; border-right: 1px solid #d6d6d6; display: flex; flex-direction: column; }
.panel-list { height: 489px; border-bottom: 1px solid #d6d6d6; }
.panel-props { flex: 1; min-height: 0; }
.list-tools { height: 28px; display: flex; align-items: center; border-bottom: 1px solid #e0e0e0; padding: 3px 0 0 4px; gap: 8px; flex: none; }
.lt { display: flex; align-items: center; gap: 4px; color: #444; }
.lt-new .tri-down { margin-left: 2px; }
.list-search { height: 19px; border-bottom: 1px solid #e0e0e0; display: flex; align-items: center; justify-content: space-between; padding: 2px 8px 0 2px; color: #aaa; flex: none; }
.ic-search { width: 12px; height: 12px; }
.tree { padding-top: 9px; }
.tree-root { display: flex; align-items: center; gap: 4px; padding-left: 13px; height: 14px; color: #444; }
.chip { width: 59px; height: 21px; margin: 6px 0 0 40px; background: #c2daf3; border-radius: 3px; line-height: 21px; padding-left: 3px; white-space: nowrap; color: #3c4a5c; }

.props { border-collapse: collapse; table-layout: fixed; width: 278px; margin-top: 1px; }
.c-n { width: 21px; } .c-name { width: 107px; } .c-val { width: 109px; } .c-add { width: 41px; }
.props th, .props td { height: 21px; padding: 0 3px; border: 1px solid #dedede; font-weight: 400; white-space: nowrap; overflow: hidden; color: #3a3a3a; text-align: left; }
.props th { text-align: center; }
.props .th-on { background: #7fb8f8; color: #fff; }
.props .num { text-align: center; padding: 0; }
.props .num-on { background: #7fb8f8; color: #fff; font-weight: 700; }
.props .link { color: #1f5fe6; }
.props .cell-edit { box-shadow: inset 0 0 0 2px #7a7a7a; }
.plus { display: inline-block; width: 12px; height: 12px; border: 1px solid #888; border-radius: 2px; line-height: 9px; text-align: center; margin-right: 7px; font-size: 11px; }

.splitter { width: 4px; flex: none; display: flex; align-items: flex-start; padding-top: 389px; }
.splitter-r { width: 5px; }
.handle { width: 100%; height: 100px; background: #6a7178; display: flex; align-items: center; justify-content: center; }
.handle::after { content: ""; width: 0; height: 0; border: 3px solid transparent; border-left: 0; border-right: 3px solid #aab0b5; }
.handle-r::after { border-right: 0; border-left: 3px solid #aab0b5; }

.center { width: 1262px; flex: none; display: flex; flex-direction: column; }
.center-top { height: 27px; background: #f0f0f0; border-top: 1px solid #ddd; flex: none; }
.tabs { height: 21px; flex: none; background: #c0c0c0; display: flex; }
.tab { width: 270px; flex: none; display: flex; align-items: center; gap: 3px; padding: 2px 0 0 3px; border-right: 1px solid #8f969d; white-space: nowrap; overflow: hidden; color: #3a3a3a; letter-spacing: .3px; }
.tab-on { background: #e2e2e2; }
.canvas { position: relative; flex: 1; min-height: 0; background: #000; overflow: hidden; }
.drawing { position: absolute; inset: 0; width: 100%; height: 100%; }
.cad-t { font: 18px "Liberation Sans", sans-serif; fill: #eee; }
.cad-slope { font-size: 15px; }
.cad-dim { fill: #bbb; }
.cad-title { font: 300 33px "Noto Sans CJK SC", sans-serif; fill: #eee; }

.stations { position: absolute; left: 3px; top: 3px; width: 120px; height: 802px; background: #26466e; border: 1px solid #2f6db5; border-top: 0; display: flex; flex-direction: column; }
.stations-head { height: 12px; background: #1f3a5e; flex: none; display: flex; justify-content: flex-end; color: #cfe0f5; font-weight: 700; font-size: 11px; line-height: 11px; padding-right: 6px; }
.stations-body { height: 745px; flex: none; margin-left: 7px; width: 99px; padding: 3px 0 0 4px; background: #223f66; display: flex; overflow: hidden; }
.st-list { list-style: none; margin: 0; padding: 0; width: 81px; flex: none; }
.st-list li { height: 21px; line-height: 20px; background: #2e5080; border-bottom: 1px solid #1c3a60; color: #e6eaf0; font-size: 13px; padding-left: 2px; }
.st-list .st-on { border: 1px solid #5b9be0; border-right: 0; padding-left: 1px; line-height: 19px; }
.st-scroll { width: 14px; flex: none; background: #163558; padding: 14px 3px 0; }
.st-scroll span { display: block; height: 48px; background: #3d6697; border-radius: 4px; }
.st-foot { display: flex; justify-content: flex-end; padding: 12px 9px 0 0; }
.btn-blue { background: #2f80e4; color: #fff; border-radius: 3px; display: flex; align-items: center; justify-content: center; }
.btn-ok { width: 80px; height: 26px; }
.btn-other { width: 79px; height: 24px; border: 1px solid #23508c; padding-top: 1px; }

.elev { position: absolute; left: 131px; top: 15px; width: 220px; height: 120px; background: #2d4f7c; border: 1px solid #3b6db0; color: #e6eaf0; padding: 6px 6px 0 5px; }
.elev-row { display: flex; align-items: center; height: 26px; }
.elev-row > span:first-child { padding-top: 2px; }
.elev-input { width: 60px; height: 26px; margin-left: 6px; background: #2a5d94; border: 1px solid #1f3a5e; border-radius: 3px; font-size: 13px; line-height: 24px; padding-left: 3px; }
.elev-unit { margin-left: 7px; font-size: 13px; }
.elev-line { height: 22px; line-height: 22px; }
.elev-first { margin-top: 6px; }
.elev-second { margin-top: 1px; }
.elev-foot { display: flex; justify-content: flex-end; margin-top: 5px; }

.strip { position: absolute; right: 0; top: 0; width: 33px; height: 216px; background: #fff; border-radius: 0 0 0 3px; display: flex; flex-direction: column; align-items: center; padding-top: 13px; gap: 9px; border: 1px solid #ddd; border-width: 0 0 1px 1px; }
.tri-strip { margin-bottom: -3px; border-top-color: #555; }
.strip-sep { width: 22px; height: 1px; background: #666; margin: -2px 0 -3px; flex: none; }

.panel-right { flex: 1; min-width: 0; overflow: hidden; display: flex; flex-direction: column; border-left: 1px solid #d6d6d6; }
.r-tabs { display: flex; gap: 4px; padding: 5px 0 0 2px; height: 27px; flex: none; margin-bottom: -1px; white-space: nowrap; position: relative; }
.r-tab { width: 61px; flex: none; height: 22px; line-height: 22px; padding-left: 7px; background: #e6e6e6; border: 1px solid #d5d5d5; border-bottom: 0; border-radius: 3px 3px 0 0; color: #555; font-size: 12px; }
.r-tab-on { background: #fff; color: #2f80e4; height: 23px; z-index: 1; position: relative; }
.r-tree { height: 780px; flex: none; margin-left: 2px; width: 110px; border: 1px solid #c9c9c9; border-right: 0; padding-top: 6px; }
.r-row { height: 24px; display: flex; align-items: center; white-space: nowrap; padding-left: 8px; color: #444; }
.r-row .tri-down { margin-right: 7px; }
.r-row .check { margin-right: 7px; }
.r-child { padding-left: 31px; }
.r-child .tri-right { margin-right: 6px; }
.r-leaf { padding-left: 43px; }
.check { width: 14px; height: 14px; background: #2f80e4; border-radius: 3px; flex: none; display: flex; align-items: center; justify-content: center; }
.check::after { content: ""; width: 8px; height: 4px; border-left: 2px solid #fff; border-bottom: 2px solid #fff; transform: rotate(-45deg); margin-top: -2px; }
.r-foot { display: flex; padding: 8px 0 0 3px; }
.r-foot .check { margin-top: 5px; }
.r-foot-btn { width: 40px; height: 20px; margin-left: 48px; border: 1px solid #ccc; border-radius: 3px; }

/* floating system widgets */
.ai-badge { position: absolute; left: 1669px; top: -6px; width: 30px; height: 26px; border-radius: 5px; background: linear-gradient(120deg, #2f9bf0, #a050e8); color: #fff; font: 700 14px/30px "Noto Sans", sans-serif; text-align: center; }
.gauge { position: absolute; left: 1600px; top: 15px; display: flex; align-items: center; }
.ring { width: 68px; height: 70px; position: relative; z-index: 1; display: flex; align-items: center; justify-content: center; }
.ring-art { position: absolute; inset: 0; width: 100%; height: 100%; overflow: visible; }
.ring-text { position: relative; font: 300 24px/1 Lato, sans-serif; color: #4f4f4f; margin-top: 2px; }
.ring-text small { font-size: 13px; }
.gauge-pill { width: 100px; height: 40px; margin-left: -18px; border-radius: 0 20px 20px 0; background: #f5f5f5; border: 1px solid #e3e3e3; display: flex; align-items: center; padding-left: 20px; gap: 7px; box-shadow: 0 1px 3px rgba(0,0,0,.08); margin-top: -3px; }
.gauge-stats { width: 48px; flex: none; display: flex; flex-direction: column; gap: 6px; }
.gauge-line { display: flex; align-items: center; font-size: 11px; line-height: 12px; white-space: nowrap; gap: 4px; color: #666; }
.gauge-line b { font-weight: 500; color: #222; margin-left: 8px; font-size: 10px; }
.gauge-line em { color: #2bd97e; }
.ic-up { width: 9px; height: 12px; }
.gauge-plus { width: 16px; height: 16px; border-radius: 50%; background: #2b90f5; color: #fff; font: 700 14px/15px "Noto Sans", sans-serif; text-align: center; flex: none; }

/* modal dialog */
.dialog { position: absolute; left: 874px; top: 35px; width: 361px; height: 930px; box-shadow: 0 0 14px rgba(0,0,0,.4); border: 1px solid #ccc; color: #444;
  background:
    radial-gradient(ellipse 60px 30px at 275px 508px, #f1f1f1, transparent),
    radial-gradient(ellipse 70px 60px at 300px 560px, #eaeaea, transparent),
    linear-gradient(#fff 0, #fbfbfb 80px, #e8e8e8 120px, #e2e2e2 150px, #e3e3e3 100%); }
.dialog-head { height: 38px; display: flex; align-items: center; justify-content: space-between; padding: 0 13px 0 17px; font-size: 14px; }
.dialog-x { width: 12px; height: 12px; }
.dialog-body { display: flex; padding: 13px 0 0 25px; }
.info { width: 28px; height: 28px; flex: none; }
.dialog-lines { margin: -6px 0 0 11px; }
.dialog-lines p { margin: 0; height: 26px; line-height: 26px; font-size: 14.670px; white-space: nowrap; }
```
